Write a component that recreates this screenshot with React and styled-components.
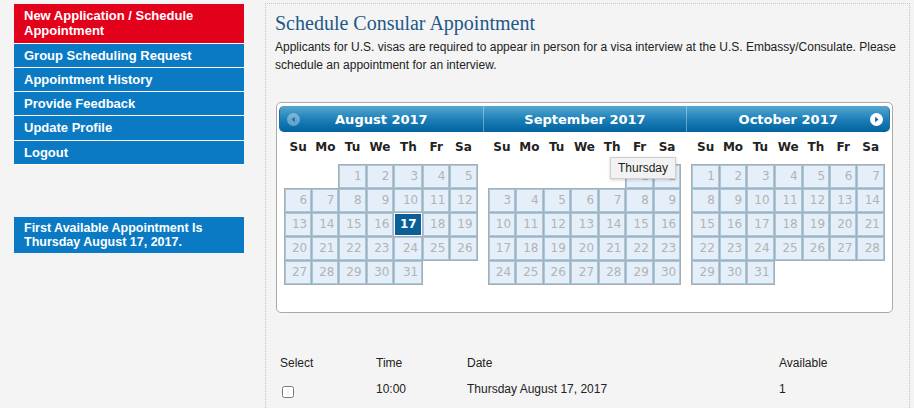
import styled, { createGlobalStyle } from 'styled-components';

const GlobalStyle = createGlobalStyle`
  body {
    margin: 0;
    background: #f4f4f4;
    font-family: "Liberation Sans", Arial, sans-serif;
  }
`;

const Page = styled.div`
  display: flex;
  align-items: flex-start;
  gap: 21px;
  padding: 3px 0 0 14px;
  height: 405px;
  overflow: hidden;
`;

const Sidebar = styled.nav`
  width: 230px;
  margin-top: 1px;
  display: flex;
  flex-direction: column;
`;

const NavItem = styled.a`
  display: block;
  padding: 4px 10px 4px;
  background: ${({ $active }) => ($active ? '#e3001b' : '#0a7ac4')};
  border-bottom: 1px solid #fff;
  color: #fff;
  font: bold 13px/15.25px "Liberation Sans", Arial, sans-serif;
  text-decoration: none;
`;

const Notice = styled.div`
  margin-top: 52px;
  padding: 4px 10px;
  background: #0a7ac4;
  color: #fff;
  font: bold 12.5px/14px "Liberation Sans", Arial, sans-serif;
`;

const Panel = styled.main`
  width: 634px;
  height: 420px;
  padding: 0 0 0 9px;
  border: 1px dotted #c4c4c4;
  border-bottom: none;
`;

const Title = styled.h1`
  margin: 6px 0 0;
  font: normal 20px/26px "Liberation Serif", Georgia, serif;
  color: #1d5887;
`;

const Intro = styled.p`
  margin: 2px 0 0;
  width: 632px;
  font-size: 12px;
  line-height: 18px;
  color: #222;
`;

const CalendarBox = styled.div`
  position: relative;
  width: 611px;
  margin: 28px 0 0 1px;
  padding: 3px 2px;
  display: flex;
  background: #fff;
  border: 1px solid #aaa;
  border-radius: 5px;
`;

const Group = styled.div`
  flex: 1;
  padding-bottom: 24px;
`;

const GroupHeader = styled.div`
  height: 26px;
  display: grid;
  grid-template-columns: 26px 1fr 26px;
  align-items: center;
  background: linear-gradient(#55a7d2, #1a7db6 55%, #02639f);
  border-left: 1px solid ${({ $first }) => ($first ? '#1f6e9f' : 'rgba(255,255,255,0.35)')};
  border-right: ${({ $last }) => ($last ? '1px solid #1f6e9f' : 'none')};
  border-radius: ${({ $first, $last }) =>
    $first ? '5px 0 0 5px' : $last ? '0 5px 5px 0' : '0'};
  color: #fff;
  font: bold 13px "DejaVu Sans", Verdana, sans-serif;
`;

const GroupTitle = styled.span`
  grid-column: 2;
  text-align: center;
`;

const NavIcon = styled.svg`
  grid-column: ${({ $side }) => ($side === 'prev' ? 1 : 3)};
  grid-row: 1;
  justify-self: center;
`;

const Month = styled.table`
  width: 95%;
  margin: 0 auto;
  border-collapse: collapse;
  font-family: "DejaVu Sans", Verdana, sans-serif;
`;

const DayHead = styled.th`
  padding: 8px 2px 9px;
  font-size: 12px;
  line-height: 15px;
  font-weight: bold;
  color: #222;
  text-align: center;
`;

const DayCell = styled.td`
  padding: 0;
  border: ${({ $empty }) => ($empty ? 'none' : '1px solid #acacac')};
`;

const DayLink = styled.span`
  display: block;
  padding: 3px 3px;
  border: 1px solid ${({ $selected }) => ($selected ? '#fff' : '#a6c9e2')};
  background: ${({ $selected }) => ($selected ? '#0b5f98' : '#e4eff9')};
  color: ${({ $selected }) => ($selected ? '#fff' : '#b3b3b3')};
  font-size: 12px;
  font-weight: ${({ $selected }) => ($selected ? 'bold' : 'normal')};
  line-height: 15px;
  text-align: ${({ $selected }) => ($selected ? 'center' : 'right')};
`;

const Tip = styled.div`
  position: absolute;
  left: 333px;
  top: 54px;
  padding: 3px 7px;
  background: #f2f2f2;
  border: 1px solid #cfcfcf;
  box-shadow: 0 1px 3px rgba(0, 0, 0, 0.18);
  font-size: 12px;
  line-height: 14px;
  color: #222;
`;

const Slots = styled.div`
  margin-top: 42px;
  display: grid;
  grid-template-columns: 96px 91px 312px 1fr;
  row-gap: 10px;
  padding-left: 5px;
  font-size: 12px;
  line-height: 16px;
  color: #222;
`;

const Check = styled.input`
  margin: 5px 0 0 2px;
  width: 12px;
  height: 12px;
`;

const DOW = ['Su', 'Mo', 'Tu', 'We', 'Th', 'Fr', 'Sa'];

const months = [
  { name: 'August 2017', start: 2, days: 31 },
  { name: 'September 2017', start: 5, days: 30 },
  { name: 'October 2017', start: 0, days: 31 },
];

function weeks(start, days) {
  const cells = [];
  for (let i = 0; i < start; i++) cells.push(null);
  for (let d = 1; d <= days; d++) cells.push(d);
  const rows = [];
  for (let i = 0; i < cells.length; i += 7) rows.push(cells.slice(i, i + 7));
  return rows;
}

function PrevIcon() {
  return (
    <NavIcon $side="prev" width="13" height="13" viewBox="0 0 13 13">
      <circle cx="6.5" cy="6.5" r="6.5" fill="rgba(255,255,255,0.35)" />
      <path d="M7.8 3.8 L4.6 6.5 L7.8 9.2 Z" fill="#1d6fa4" />
    </NavIcon>
  );
}

function NextIcon() {
  return (
    <NavIcon $side="next" width="13" height="13" viewBox="0 0 13 13">
      <circle cx="6.5" cy="6.5" r="6.5" fill="#fff" />
      <path d="M5.2 3.8 L8.4 6.5 L5.2 9.2 Z" fill="#0b5f98" />
    </NavIcon>
  );
}

function MonthGroup({ month, index }) {
  const first = index === 0;
  const last = index === months.length - 1;
  return (
    <Group>
      <GroupHeader $first={first} $last={last}>
        {first && <PrevIcon />}
        <GroupTitle>{month.name}</GroupTitle>
        {last && <NextIcon />}
      </GroupHeader>
      <Month>
        <thead>
          <tr>
            {DOW.map((d) => (
              <DayHead key={d}>{d}</DayHead>
            ))}
          </tr>
        </thead>
        <tbody>
          {weeks(month.start, month.days).map((row, r) => (
            <tr key={r}>
              {Array.from({ length: 7 }).map((_, c) => {
                const day = row[c];
                if (!day) return <DayCell key={c} $empty />;
                const selected = first && day === 17;
                return (
                  <DayCell key={c}>
                    <DayLink $selected={selected}>{day}</DayLink>
                  </DayCell>
                );
              })}
            </tr>
          ))}
        </tbody>
      </Month>
    </Group>
  );
}

export default function App() {
  return (
    <>
      <GlobalStyle />
      <Page>
        <Sidebar>
          <NavItem $active>New Application / Schedule Appointment</NavItem>
          <NavItem>Group Scheduling Request</NavItem>
          <NavItem>Appointment History</NavItem>
          <NavItem>Provide Feedback</NavItem>
          <NavItem>Update Profile</NavItem>
          <NavItem>Logout</NavItem>
          <Notice>First Available Appointment Is Thursday August 17, 2017.</Notice>
        </Sidebar>
        <Panel>
          <Title>Schedule Consular Appointment</Title>
          <Intro>
            Applicants for U.S. visas are required to appear in person for a visa interview at the
            U.S. Embassy/Consulate. Please schedule an appointment for an interview.
          </Intro>
          <CalendarBox>
            {months.map((m, i) => (
              <MonthGroup key={m.name} month={m} index={i} />
            ))}
            <Tip>Thursday</Tip>
          </CalendarBox>
          <Slots>
            <span>Select</span>
            <span>Time</span>
            <span>Date</span>
            <span>Available</span>
            <span>
              <Check type="checkbox" />
            </span>
            <span>10:00</span>
            <span>Thursday August 17, 2017</span>
            <span>1</span>
          </Slots>
        </Panel>
      </Page>
    </>
  );
}
